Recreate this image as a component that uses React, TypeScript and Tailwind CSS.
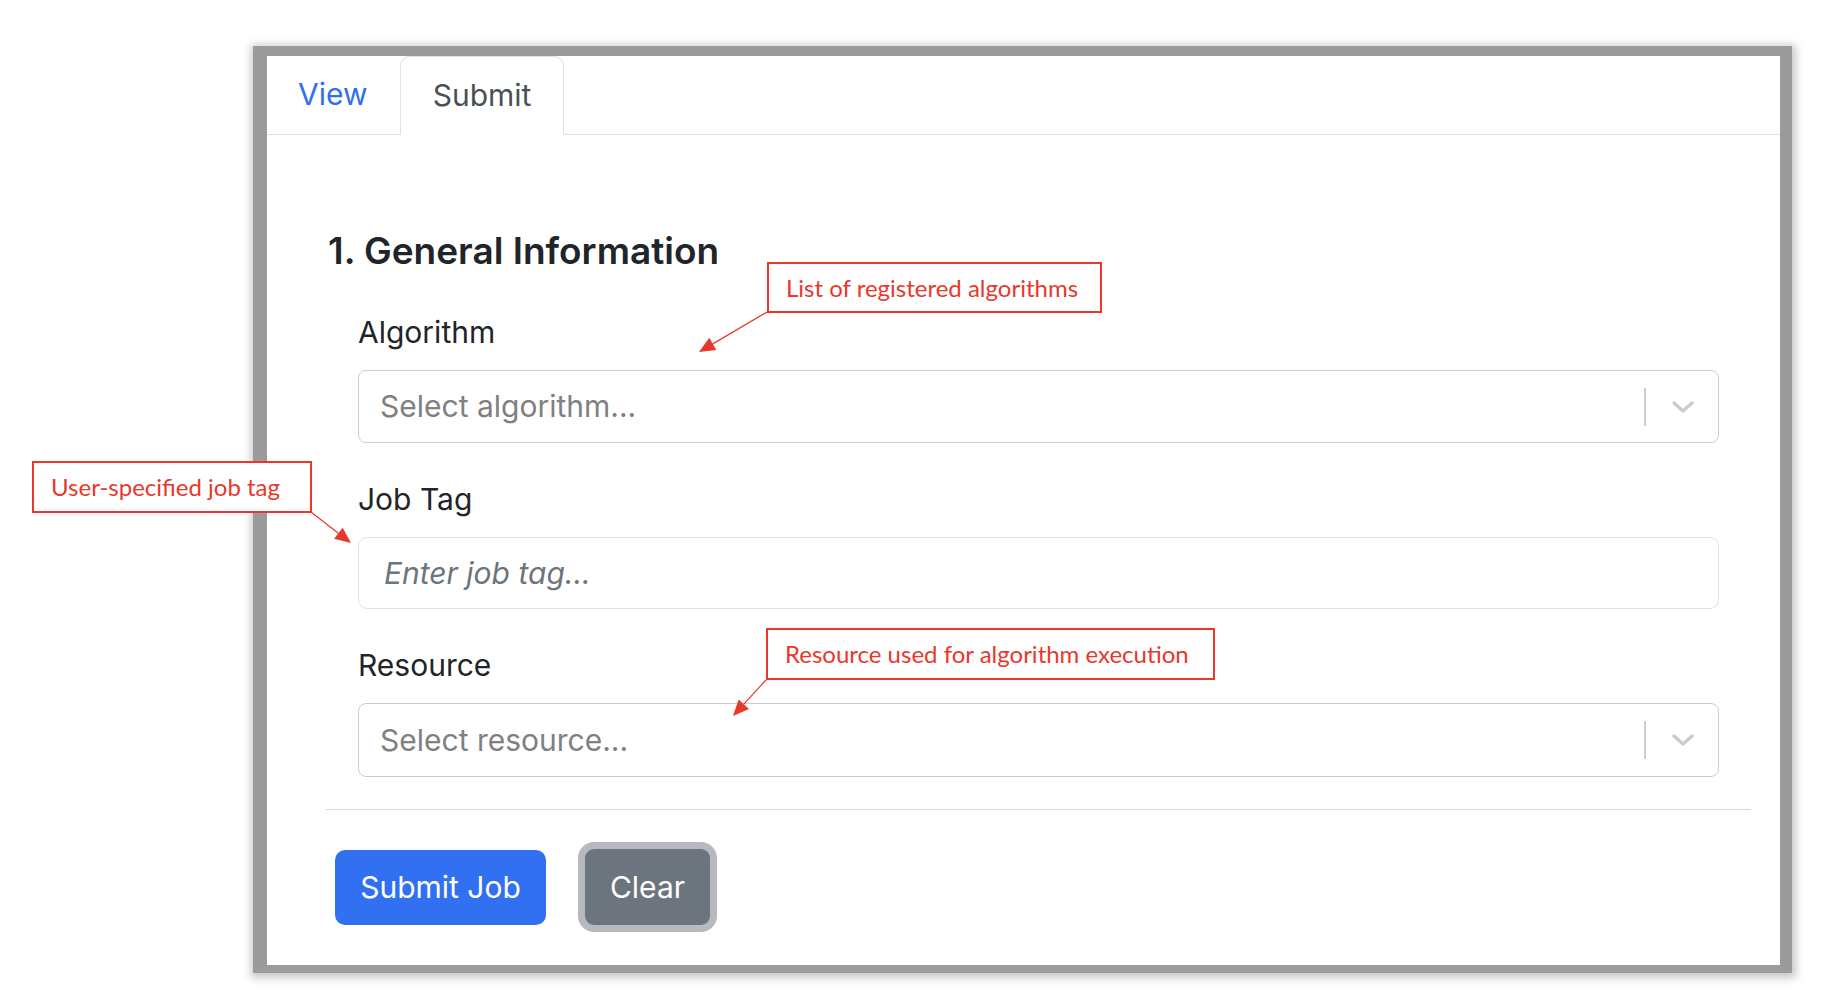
import React from 'react';

// Callout arrows: line from the box corner to a filled head at the tip
const ARROWS = [
  { x1: 767, y1: 312, x2: 699, y2: 352 },
  { x1: 311, y1: 512, x2: 351, y2: 543 },
  { x1: 766, y1: 680, x2: 733, y2: 716 },
];

function Arrow({ x1, y1, x2, y2 }: { x1: number; y1: number; x2: number; y2: number }) {
  const dx = x2 - x1;
  const dy = y2 - y1;
  const len = Math.hypot(dx, dy);
  const ux = dx / len;
  const uy = dy / len;
  const bx = x2 - ux * 16;
  const by = y2 - uy * 16;
  const nx = -uy * 7;
  const ny = ux * 7;
  return (
    <g>
      <line x1={x1} y1={y1} x2={bx} y2={by} stroke="#e8382c" strokeWidth="1.2" />
      <polygon points={`${x2},${y2} ${bx + nx},${by + ny} ${bx - nx},${by - ny}`} fill="#e8382c" />
    </g>
  );
}

function Callout({ className, children }: { className: string; children: React.ReactNode }) {
  return (
    <div
      className={`absolute flex items-center whitespace-nowrap border-2 border-[#e8382c] bg-white pl-[17px] font-['Lato',sans-serif] text-[24px] leading-none text-[#e8382c] ${className}`}
    >
      {children}
    </div>
  );
}

function Chevron() {
  return (
    <svg width="24" height="14" viewBox="0 0 24 14" fill="none">
      <path d="M3 3l9 8 9-8" stroke="#cccccc" strokeWidth="3.5" strokeLinecap="round" strokeLinejoin="round" />
    </svg>
  );
}

function SelectBox({ placeholder, tall }: { placeholder: string; tall?: boolean }) {
  return (
    <div className={`flex items-center rounded-[8px] border border-[#cccccc] bg-white ${tall ? 'h-[74px]' : 'h-[73px]'}`}>
      <span className="flex-1 pl-[21px] text-[30px] text-[#808080]">{placeholder}</span>
      <span className="h-[38px] w-[2px] bg-[#cccccc]" />
      <span className="flex w-[72px] items-center justify-center pl-[1px]">
        <Chevron />
      </span>
    </div>
  );
}

function FieldLabel({ children }: { children: React.ReactNode }) {
  return <div className="mb-[20px] h-[36px] text-[30px] leading-[36px] text-[#212529]">{children}</div>;
}

export default function App() {
  return (
    <div className="relative h-[1004px] w-[1828px] overflow-hidden bg-white">
      {/* Framed screenshot */}
      <div className="ml-[253px] mt-[46px] h-[927px] w-[1539px] border-b-[8px] border-l-[14px] border-r-[12px] border-t-[10px] border-[#9b9b9b] bg-white font-['Inter',sans-serif] shadow-[1px_2px_8px_3px_rgba(0,0,0,0.22)]">
        {/* Tabs */}
        <div className="flex h-[79px] border-b border-[#dee2e6]">
          <div className="flex w-[133px] items-center pb-[2px] pl-[31px] text-[30px] text-[#2f6ff0]">View</div>
          <div className="-mb-px flex w-[164px] items-center justify-center rounded-t-[10px] border border-b-0 border-[#dee2e6] bg-white pb-[2px] text-[30px] text-[#495057]">
            Submit
          </div>
        </div>

        {/* Form */}
        <div className="ml-[59px] mr-[29px] pt-[93px]">
          <h2 className="mb-[40px] h-[46px] pl-[2px] text-[37px] font-semibold leading-[46px] text-[#212529]">
            1. General Information
          </h2>

          <div className="mx-[32px]">
            <FieldLabel>Algorithm</FieldLabel>
            <SelectBox placeholder="Select algorithm..." />

            <div className="mt-[38px]">
              <FieldLabel>Job Tag</FieldLabel>
              <div className="flex h-[72px] items-center rounded-[9px] border border-[#dee2e6] bg-white pl-[25px] text-[30px] italic text-[#6c757d]">
                Enter job tag...
              </div>
            </div>

            <div className="mt-[38px]">
              <FieldLabel>Resource</FieldLabel>
              <SelectBox placeholder="Select resource..." tall />
            </div>
          </div>

          <div className="mt-[32px] h-px bg-[#d6d8db]" />

          <div className="ml-[9px] mt-[39px] flex items-center">
            <button
              type="button"
              className="h-[75px] w-[211px] rounded-[10px] bg-[#3070f1] text-[30px] text-white"
            >
              Submit Job
            </button>
            <button
              type="button"
              className="ml-[39px] h-[76px] w-[125px] rounded-[9px] bg-[#6c757d] text-[30px] text-white ring-[7px] ring-[#b6babe]"
            >
              Clear
            </button>
          </div>
        </div>
      </div>

      {/* Annotations */}
      <Callout className="left-[767px] top-[262px] h-[51px] w-[335px]">List of registered algorithms</Callout>
      <Callout className="left-[32px] top-[461px] h-[52px] w-[280px]">User-specified job tag</Callout>
      <Callout className="left-[766px] top-[628px] h-[52px] w-[449px]">Resource used for algorithm execution</Callout>

      <svg className="pointer-events-none absolute inset-0" width="1828" height="1004">
        {ARROWS.map((a, i) => (
          <Arrow key={i} {...a} />
        ))}
      </svg>
    </div>
  );
}
